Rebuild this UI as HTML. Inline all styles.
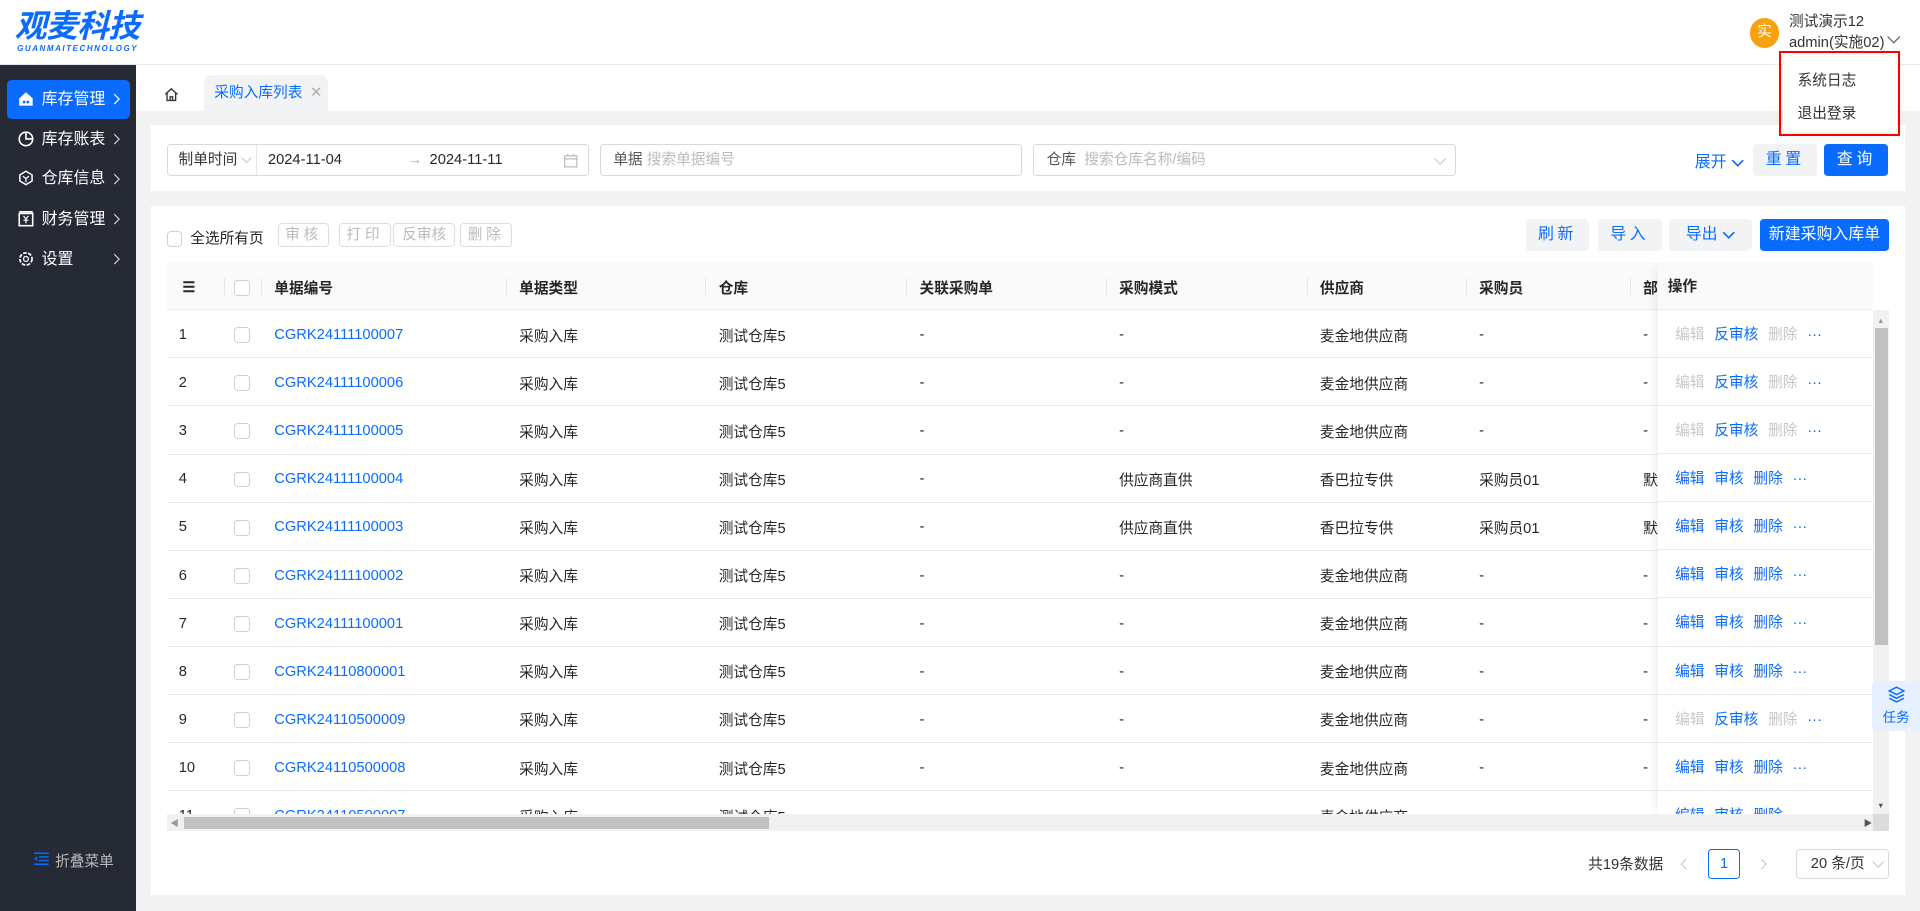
<!DOCTYPE html>
<html><head><meta charset="utf-8"><style>
html{zoom:1.22449}
*{box-sizing:border-box;margin:0;padding:0}
body{width:1568px;height:744px;overflow:hidden;position:relative;background:#f2f2f2;font-family:"Liberation Sans","Noto Sans CJK SC",sans-serif;font-size:12px;color:#262626}
.a{position:absolute}
.hdr{left:0;top:0;width:1568px;height:53px;background:#fff;border-bottom:1px solid #e8e8e8}
.side{left:0;top:53px;width:111px;height:691px;background:#262a35}
.mi{position:absolute;left:6px;width:100px;height:32px;color:#fff;font-size:13px;line-height:32px;padding-left:28px}
.mi .ic{position:absolute;left:9px;top:9px;width:13px;height:13px}
.mi .ch{position:absolute;right:8px;top:11px}
.btn{position:absolute;height:26px;line-height:26px;text-align:center;border-radius:3px;font-size:13px}
.gbtn{background:#f2f3f5;color:#0a6cff}
.bbtn{background:#0a6cff;color:#fff}
.dbtn{position:absolute;top:182px;height:20px;line-height:18px;border:1px solid #ddd;border-radius:3px;color:#bbb;font-size:12px;text-align:center;letter-spacing:3px}
.inp{position:absolute;top:118px;height:26px;border:1px solid #d9d9d9;border-radius:3px;background:#fff;line-height:24px;font-size:12px}
.cb{display:inline-block;width:13px;height:13px;border:1px solid #d0d0d0;border-radius:3px;background:#fff;vertical-align:middle}
table{border-collapse:collapse;table-layout:fixed}
td,th{height:39.3px;padding:2px 10px 0;text-align:left;white-space:nowrap;overflow:hidden;border-bottom:1px solid #ececec;font-size:12px}
th{font-weight:bold;background:#fafafa;height:38px;position:relative}
th.s:after{content:"";position:absolute;right:0;top:12px;height:14px;border-right:1px solid #e6e6e6}
.lk{color:#0a6cff}
.ops{left:1218px;width:176px;background:#fff;box-shadow:-6px 0 8px -4px rgba(0,0,0,.08)}
.ops div{height:39.3px;line-height:41px;padding-left:14px;border-bottom:1px solid #ececec;white-space:nowrap}
.ops span{margin-right:8px}
.g{color:#c8c8c8}.b{color:#0a6cff}
</style></head><body>
<div class="a hdr"></div>
<div class="a" style="left:12px;top:7px;font-size:26px;font-style:italic;font-weight:bold;color:#0a6cff;line-height:28px;letter-spacing:-0.5px">观麦科技</div>
<div class="a" style="left:14px;top:36px;font-size:6.5px;font-style:italic;font-weight:bold;color:#0a6cff;letter-spacing:1.3px">GUANMAITECHNOLOGY</div>
<div class="a" style="left:1429px;top:15px;width:24px;height:24px;border-radius:50%;background:#f5a20c;color:#fff;text-align:center;line-height:24px;font-size:12px">实</div>
<div class="a" style="left:1461px;top:10px;font-size:12px;color:#333;line-height:17px">测试演示12<br>admin(实施02)</div>
<div class="a" style="left:1541px;top:29px;line-height:0"><svg width="11" height="7"><path d="M0.5 0.5l5 5 5-5" stroke="#666" fill="none"/></svg></div>

<div class="a side"></div>
<div class="mi" style="top:65px;background:#0a6cff;border-radius:4px"><svg class="ic" viewBox="0 0 13 13"><path d="M1 6L6.5 1 12 6v6H1z" fill="#fff"/><rect x="4" y="8" width="2" height="2" fill="#0a6cff"/><rect x="7" y="8" width="2" height="2" fill="#0a6cff"/></svg>库存管理<svg class="ch" width="6" height="10"><path d="M1 1l4 4-4 4" stroke="#fff" fill="none"/></svg></div>
<div class="mi" style="top:98px"><svg class="ic" viewBox="0 0 13 13"><circle cx="6.5" cy="6.5" r="5.5" stroke="#fff" fill="none" stroke-width="1.3"/><path d="M6.5 1v5.5H12" stroke="#fff" fill="none" stroke-width="1.3"/></svg>库存账表<svg class="ch" width="6" height="10"><path d="M1 1l4 4-4 4" stroke="#ccc" fill="none"/></svg></div>
<div class="mi" style="top:130px"><svg class="ic" viewBox="0 0 13 13"><path d="M6.5 1l5 3v5l-5 3-5-3V4z" stroke="#fff" fill="none" stroke-width="1.2"/><path d="M4 5l2.5 2 2.5-2M6.5 7v3" stroke="#fff" fill="none"/></svg>仓库信息<svg class="ch" width="6" height="10"><path d="M1 1l4 4-4 4" stroke="#ccc" fill="none"/></svg></div>
<div class="mi" style="top:163px"><svg class="ic" viewBox="0 0 13 13"><rect x="1" y="2" width="11" height="10" stroke="#fff" fill="none" stroke-width="1.3"/><rect x="1" y="0" width="11" height="1.3" fill="#fff"/><path d="M4.5 4l2 2.5 2-2.5M6.5 6.5V10M4.5 7.5h4" stroke="#fff" fill="none"/></svg>财务管理<svg class="ch" width="6" height="10"><path d="M1 1l4 4-4 4" stroke="#ccc" fill="none"/></svg></div>
<div class="mi" style="top:196px"><svg class="ic" viewBox="0 0 13 13"><circle cx="6.5" cy="6.5" r="5" stroke="#fff" fill="none" stroke-width="1.4" stroke-dasharray="3 1.2"/><circle cx="6.5" cy="6.5" r="2" stroke="#fff" fill="none"/></svg>设置<svg class="ch" width="6" height="10"><path d="M1 1l4 4-4 4" stroke="#ccc" fill="none"/></svg></div>
<svg class="a" style="left:28px;top:696px" width="12" height="11"><path d="M0 1h12M4 4h8M4 7h8M0 10h12" stroke="#0a6cff" stroke-width="1.2"/><path d="M0 5.5l2.5-2v4z" fill="#0a6cff"/></svg>
<div class="a" style="left:45px;top:694px;color:#bbb;font-size:12px">折叠菜单</div>

<div class="a" style="left:111px;top:53px;width:1457px;height:38px;background:#fff"></div>
<svg class="a" style="left:134px;top:71px" width="12" height="12"><path d="M1 6L6 1.5 11 6M2.5 5v6h7V5M5 11V8h2v3" stroke="#333" fill="none" stroke-width="1.1"/></svg>
<div class="a" style="left:167px;top:61px;width:101px;height:30px;background:#f2f3f5;border-radius:6px 6px 0 0;color:#0a6cff;line-height:30px;padding-left:8px">采购入库列表 <span style="color:#aaa;margin-left:3px">✕</span></div>

<div class="a" style="left:123px;top:102px;width:1433px;height:54px;background:#fff"></div>
<div class="inp" style="left:136px;width:345px;line-height:26px"><span class="a" style="left:9px;color:#333">制单时间</span><svg class="a" style="left:60px;top:9px" width="9" height="6"><path d="M0.5 0.5l4 4 4-4" stroke="#ccc" fill="none"/></svg><span class="a" style="left:72px;top:0;height:24px;border-left:1px solid #e5e5e5"></span><span class="a" style="left:82px">2024-11-04</span><span class="a" style="left:196px;color:#aaa">→</span><span class="a" style="left:214px">2024-11-11</span><svg class="a" style="left:324px;top:7px" width="11" height="11"><rect x="0.5" y="1.5" width="10" height="9" stroke="#bbb" fill="none"/><path d="M0.5 4h10M3 0v2M8 0v2" stroke="#bbb"/></svg></div>
<div class="inp" style="left:490px;width:345px;padding-left:10px;color:#555;line-height:26px">单据 <span style="color:#bbb">搜索单据编号</span></div>
<div class="inp" style="left:844px;width:345px;padding-left:10px;color:#555;line-height:26px">仓库 &nbsp;<span style="color:#bbb">搜索仓库名称/编码</span><svg class="a" style="left:326px;top:10px" width="10" height="6"><path d="M0.5 0.5l4.5 4.5 4.5-4.5" stroke="#ccc" fill="none"/></svg></div>
<div class="a" style="left:1384px;top:122px;color:#0a6cff;font-size:13px">展开 <svg width="11" height="7"><path d="M1 1l4.5 4.5L10 1" stroke="#0a6cff" fill="none" stroke-width="1.3"/></svg></div>
<div class="btn gbtn" style="left:1432px;top:118px;width:52px;letter-spacing:3px">重置</div>
<div class="btn bbtn" style="left:1490px;top:118px;width:52px;letter-spacing:3px">查询</div>

<div class="a" style="left:123px;top:168px;width:1433px;height:563px;background:#fff"></div>
<div class="a" style="left:136px;top:185px"><span class="cb"></span> <span style="margin-left:3px">全选所有页</span></div>
<div class="dbtn" style="left:227px;width:42px">审核</div>
<div class="dbtn" style="left:277px;width:42px">打印</div>
<div class="dbtn" style="left:321px;width:51px;letter-spacing:0">反审核</div>
<div class="dbtn" style="left:376px;width:42px">删除</div>
<div class="btn gbtn" style="left:1246px;top:179px;width:52px;letter-spacing:3px">刷新</div>
<div class="btn gbtn" style="left:1305px;top:179px;width:52px;letter-spacing:3px">导入</div>
<div class="btn gbtn" style="left:1363px;top:179px;width:68px">导出 <svg width="11" height="7"><path d="M1 1l4.5 4.5L10 1" stroke="#0a6cff" fill="none" stroke-width="1.3"/></svg></div>
<div class="btn bbtn" style="left:1437px;top:179px;width:106px">新建采购入库单</div>

<div class="a" style="left:136px;top:215px;width:1394px;height:450px;overflow:hidden">
<table style="width:1400px">
<colgroup><col style="width:48px"><col style="width:30px"><col style="width:200px"><col style="width:163px"><col style="width:164px"><col style="width:163px"><col style="width:164px"><col style="width:130px"><col style="width:134px"><col style="width:204px"></colgroup>
<tr><th class="s" style="padding-left:13px">☰</th><th class="s" style="padding-left:7px"><span class="cb"></span></th><th class="s">单据编号</th><th class="s">单据类型</th><th class="s">仓库</th><th class="s">关联采购单</th><th class="s">采购模式</th><th class="s">供应商</th><th class="s">采购员</th><th>部</th></tr>
<tr><td>1</td><td style="padding-left:7px"><span class="cb"></span></td><td class="lk">CGRK24111100007</td><td>采购入库</td><td>测试仓库5</td><td>-</td><td>-</td><td>麦金地供应商</td><td>-</td><td>-</td></tr>
<tr><td>2</td><td style="padding-left:7px"><span class="cb"></span></td><td class="lk">CGRK24111100006</td><td>采购入库</td><td>测试仓库5</td><td>-</td><td>-</td><td>麦金地供应商</td><td>-</td><td>-</td></tr>
<tr><td>3</td><td style="padding-left:7px"><span class="cb"></span></td><td class="lk">CGRK24111100005</td><td>采购入库</td><td>测试仓库5</td><td>-</td><td>-</td><td>麦金地供应商</td><td>-</td><td>-</td></tr>
<tr><td>4</td><td style="padding-left:7px"><span class="cb"></span></td><td class="lk">CGRK24111100004</td><td>采购入库</td><td>测试仓库5</td><td>-</td><td>供应商直供</td><td>香巴拉专供</td><td>采购员01</td><td>默</td></tr>
<tr><td>5</td><td style="padding-left:7px"><span class="cb"></span></td><td class="lk">CGRK24111100003</td><td>采购入库</td><td>测试仓库5</td><td>-</td><td>供应商直供</td><td>香巴拉专供</td><td>采购员01</td><td>默</td></tr>
<tr><td>6</td><td style="padding-left:7px"><span class="cb"></span></td><td class="lk">CGRK24111100002</td><td>采购入库</td><td>测试仓库5</td><td>-</td><td>-</td><td>麦金地供应商</td><td>-</td><td>-</td></tr>
<tr><td>7</td><td style="padding-left:7px"><span class="cb"></span></td><td class="lk">CGRK24111100001</td><td>采购入库</td><td>测试仓库5</td><td>-</td><td>-</td><td>麦金地供应商</td><td>-</td><td>-</td></tr>
<tr><td>8</td><td style="padding-left:7px"><span class="cb"></span></td><td class="lk">CGRK24110800001</td><td>采购入库</td><td>测试仓库5</td><td>-</td><td>-</td><td>麦金地供应商</td><td>-</td><td>-</td></tr>
<tr><td>9</td><td style="padding-left:7px"><span class="cb"></span></td><td class="lk">CGRK24110500009</td><td>采购入库</td><td>测试仓库5</td><td>-</td><td>-</td><td>麦金地供应商</td><td>-</td><td>-</td></tr>
<tr><td>10</td><td style="padding-left:7px"><span class="cb"></span></td><td class="lk">CGRK24110500008</td><td>采购入库</td><td>测试仓库5</td><td>-</td><td>-</td><td>麦金地供应商</td><td>-</td><td>-</td></tr>
<tr><td>11</td><td style="padding-left:7px"><span class="cb"></span></td><td class="lk">CGRK24110500007</td><td>采购入库</td><td>测试仓库5</td><td>-</td><td>-</td><td>麦金地供应商</td><td>-</td><td>-</td></tr>
</table>
<div class="a ops" style="top:0;height:450px">
<div style="height:38px;line-height:40px;background:#fafafa;font-weight:bold;padding-left:8px">操作</div>
<div><span class="g">编辑</span><span class="b">反审核</span><span class="g">删除</span><span class="b">···</span></div>
<div><span class="g">编辑</span><span class="b">反审核</span><span class="g">删除</span><span class="b">···</span></div>
<div><span class="g">编辑</span><span class="b">反审核</span><span class="g">删除</span><span class="b">···</span></div>
<div class="b"><span>编辑</span><span>审核</span><span>删除</span><span>···</span></div>
<div class="b"><span>编辑</span><span>审核</span><span>删除</span><span>···</span></div>
<div class="b"><span>编辑</span><span>审核</span><span>删除</span><span>···</span></div>
<div class="b"><span>编辑</span><span>审核</span><span>删除</span><span>···</span></div>
<div class="b"><span>编辑</span><span>审核</span><span>删除</span><span>···</span></div>
<div><span class="g">编辑</span><span class="b">反审核</span><span class="g">删除</span><span class="b">···</span></div>
<div class="b"><span>编辑</span><span>审核</span><span>删除</span><span>···</span></div>
<div class="b"><span>编辑</span><span>审核</span><span>删除</span><span>···</span></div>
</div>
</div>
<div class="a" style="left:1530px;top:253px;width:13px;height:412px;background:#f1f1f1"></div>
<div class="a" style="left:1531px;top:268px;width:11px;height:259px;background:#c1c1c1"></div>
<div class="a" style="left:1533px;top:258px;font-size:6px;color:#999">▲</div>
<div class="a" style="left:1533px;top:654px;font-size:6px;color:#555">▼</div>
<div class="a" style="left:136px;top:665px;width:1407px;height:14px;background:#f1f1f1"></div>
<div class="a" style="left:150px;top:667px;width:478px;height:10px;background:#c1c1c1"></div>
<div class="a" style="left:139px;top:667px;font-size:7px;color:#999">◀</div>
<div class="a" style="left:1522px;top:667px;font-size:7px;color:#555">▶</div>
<div class="a" style="left:1530px;top:665px;width:13px;height:14px;background:#dcdcdc"></div>

<div class="a" style="left:1297px;top:697px;color:#333">共19条数据</div>
<svg class="a" style="left:1372px;top:701px" width="6" height="10"><path d="M5 1L1 5l4 4" stroke="#ccc" fill="none"/></svg>
<div class="a" style="left:1395px;top:693px;width:26px;height:25px;border:1px solid #0a6cff;border-radius:3px;color:#0a6cff;text-align:center;line-height:23px">1</div>
<svg class="a" style="left:1437px;top:701px" width="6" height="10"><path d="M1 1l4 4-4 4" stroke="#ccc" fill="none"/></svg>
<div class="a" style="left:1467px;top:693px;width:76px;height:25px;border:1px solid #d9d9d9;border-radius:3px;line-height:23px;padding-left:11px;color:#333">20 条/页 <svg class="a" style="left:61px;top:9px" width="10" height="6"><path d="M0.5 0.5l4.5 4.5 4.5-4.5" stroke="#ccc" fill="none"/></svg></div>

<div class="a" style="left:1529px;top:556px;width:39px;height:41px;background:#e6f0ff;border-radius:4px 0 0 4px;color:#0a6cff;text-align:center;font-size:11px;padding-top:4px"><svg width="14" height="14" viewBox="0 0 14 14"><path d="M7 1l6 3-6 3-6-3z M1 7l6 3 6-3 M1 10l6 3 6-3" stroke="#0a6cff" fill="none" stroke-width="1.2"/></svg><br>任务</div>

<div class="a" style="left:1453px;top:42px;width:99px;height:69px;border:2px solid #f00"></div>
<div class="a" style="left:1456px;top:45px;width:93px;height:63px;background:#fff;border-radius:4px;box-shadow:0 2px 8px rgba(0,0,0,.1)"></div>
<div class="a" style="left:1468px;top:56px;color:#333">系统日志</div>
<div class="a" style="left:1468px;top:83px;color:#333">退出登录</div>
</body></html>
